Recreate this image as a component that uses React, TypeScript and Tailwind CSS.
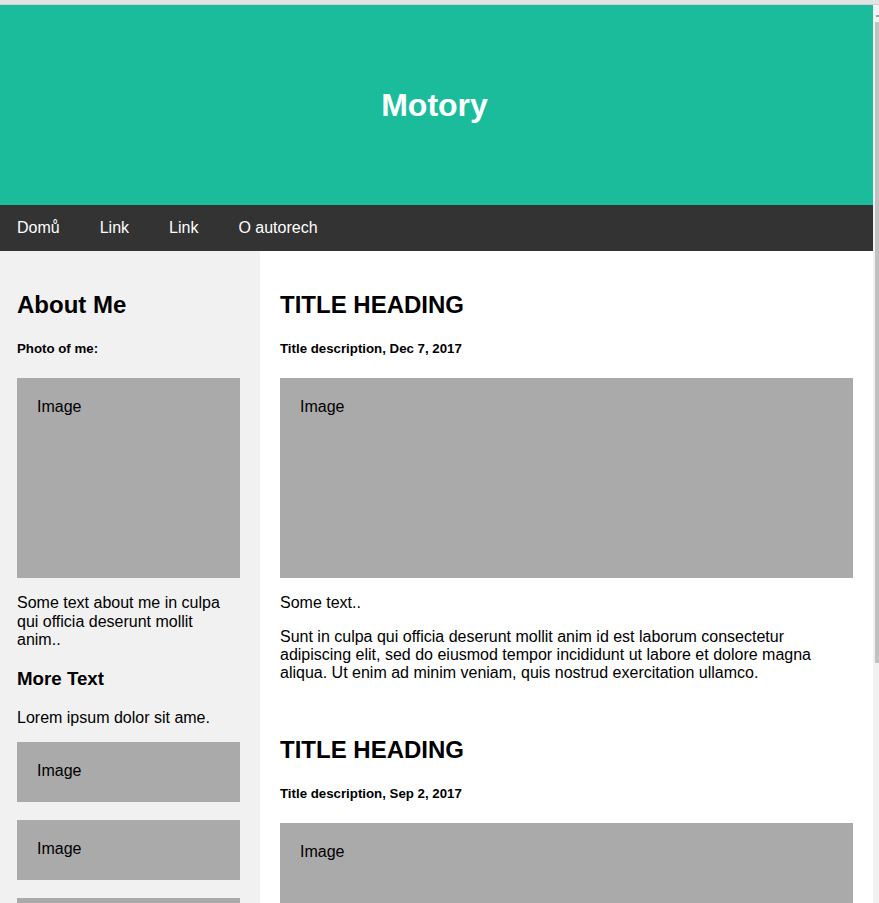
import React from "react";

const Fake = ({ h }: { h: string }) => (
  <div className={`bg-[#aaaaaa] w-full px-5 pt-5 leading-[18.4px] ${h}`}>Image</div>
);

export default function App() {
  return (
    <div
      className="h-[903px] w-[879px] overflow-hidden bg-white text-black text-[16px]"
      style={{ fontFamily: '"Liberation Sans", Arial, sans-serif' }}
    >
      <div className="h-[5px] bg-[#e3e3e3] border-b border-[#d0d0d0]" />
      <div className="flex">
        <div className="w-[873px] shrink-0">
          <div className="bg-[#1abc9c] text-white text-center h-[200px] flex items-center justify-center pr-[4px]">
            <h1 className="text-[32px] font-bold leading-[37px]">Motory</h1>
          </div>
          <div className="bg-[#333333] flex text-white">
            <a className="block pl-[17px] pr-5 py-[14px] leading-[18px]">Domů</a>
            <a className="block px-5 py-[14px] leading-[18px]">Link</a>
            <a className="block px-5 py-[14px] leading-[18px]">Link</a>
            <a className="block px-5 py-[14px] leading-[18px]">O autorech</a>
          </div>
          <div className="flex">
            <div className="w-[260px] shrink-0 bg-[#f1f1f1] pl-[17px] pr-5 pt-5 pb-5 flow-root">
              <h2 className="text-[24px] font-bold leading-[27.6px] mt-[19.92px]">About Me</h2>
              <h5 className="text-[13.28px] font-bold leading-[15.3px] mt-[22.18px]">Photo of me:</h5>
              <div className="mt-[22.18px]">
                <Fake h="h-[200px]" />
              </div>
              <p className="mt-4 leading-[18.4px]">
                Some text about me in culpa qui officia deserunt mollit anim..
              </p>
              <h3 className="text-[18.72px] font-bold leading-[21.5px] mt-[18.72px]">More Text</h3>
              <p className="mt-[19.72px] leading-[18.4px]">Lorem ipsum dolor sit ame.</p>
              <div className="mt-[14px]">
                <Fake h="h-[60px]" />
              </div>
              <div className="mt-[18px]">
                <Fake h="h-[60px]" />
              </div>
              <div className="mt-[18px]">
                <Fake h="h-[60px]" />
              </div>
            </div>
            <div className="flex-1 bg-white px-5 pt-5 flow-root">
              <h2 className="text-[24px] font-bold leading-[27.6px] mt-[19.92px]">TITLE HEADING</h2>
              <h5 className="text-[13.28px] font-bold leading-[15.3px] mt-[22.18px]">
                Title description, Dec 7, 2017
              </h5>
              <div className="mt-[22.18px]">
                <Fake h="h-[200px]" />
              </div>
              <p className="mt-4 leading-[18.4px]">Some text..</p>
              <p className="mt-[15px] leading-[18.4px]">
                Sunt in culpa qui officia deserunt mollit anim id est laborum consectetur
                adipiscing elit, sed do eiusmod tempor incididunt ut labore et dolore magna
                aliqua. Ut enim ad minim veniam, quis nostrud exercitation ullamco.
              </p>
              <div className="h-[18.4px] mt-4" />
              <h2 className="text-[24px] font-bold leading-[27.6px] mt-[19px]">TITLE HEADING</h2>
              <h5 className="text-[13.28px] font-bold leading-[15.3px] mt-[22.18px]">
                Title description, Sep 2, 2017
              </h5>
              <div className="mt-[22.18px]">
                <Fake h="h-[200px]" />
              </div>
            </div>
          </div>
        </div>
        <div className="w-[6px] shrink-0 bg-[#f1f1f1] h-[898px] relative">
          <div className="absolute left-[3px] top-[10px] w-[3px] h-[2px] bg-[#a3a3a3]" />
          <div className="absolute left-[2px] right-0 top-[17px] h-[641px] bg-[#c1c1c1]" />
        </div>
      </div>
    </div>
  );
}
